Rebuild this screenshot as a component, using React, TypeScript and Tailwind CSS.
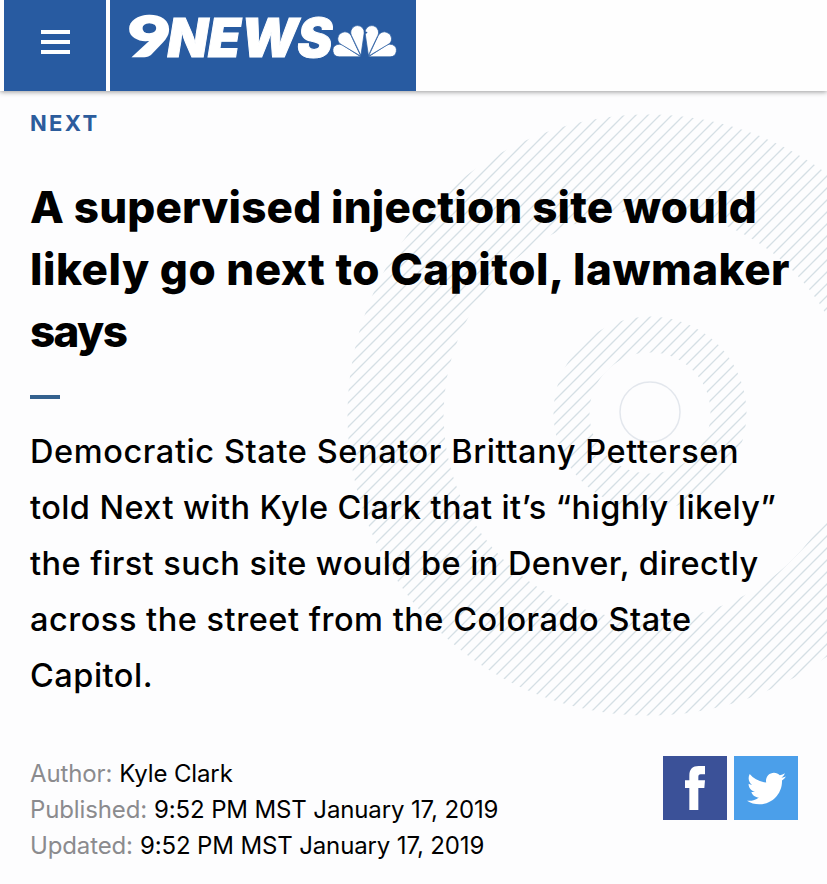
import { FaTwitter } from "react-icons/fa";

const headline = [
  { text: "A supervised injection site would", className: "tracking-[0.15px]" },
  { text: "likely go next to Capitol, lawmaker", className: "tracking-[0.5px]" },
  { text: "says", className: "tracking-[-1.6px]" },
];

const summary = [
  { text: "Democratic State Senator Brittany Pettersen", className: "tracking-[0.6px]" },
  { text: "told Next with Kyle Clark that it’s “highly likely”", className: "tracking-[0.43px]" },
  { text: "the first such site would be in Denver, directly", className: "tracking-[0.44px]" },
  { text: "across the street from the Colorado State", className: "tracking-[0.52px]" },
  { text: "Capitol.", className: "tracking-[0.5px]" },
];

const details = [
  { label: "Author:", value: "Kyle Clark" },
  { label: "Published:", value: "9:52 PM MST January 17, 2019" },
  { label: "Updated:", value: "9:52 PM MST January 17, 2019" },
];

function Feathers() {
  return (
    <g fill="#fff" stroke="#285ba1" strokeWidth="0.7">
      <path d="M360.8 56.8H339.2a6.3 6.3 0 0 1-2.2-12.2a7 7 0 0 1 5.6.4z" />
      <path d="M360.8 56.2L341.4 44.6a6.6 6.6 0 0 1 1-12.2a6.8 6.8 0 0 1 8.6 3z" />
      <path d="M360.9 55.4L351.4 35.4a6.9 6.9 0 0 1 6-9.8a6.7 6.7 0 0 1 6.8 7.4z" />
    </g>
  );
}

function Logo() {
  return (
    <svg className="block h-[91px] w-[306px]" viewBox="110 0 306 91" fill="#fff" fontWeight="900">
      <text
        x="128"
        y="55.5"
        fontFamily="Lato, sans-serif"
        fontSize="56"
        textLength="43"
        lengthAdjust="spacingAndGlyphs"
        stroke="#fff"
        strokeWidth="2.4"
      >
        9
      </text>
      <text
        x="167.5"
        y="56.5"
        fontFamily="Inter, sans-serif"
        fontStyle="italic"
        fontSize="53"
        textLength="165"
        lengthAdjust="spacingAndGlyphs"
        stroke="#fff"
        strokeWidth="1"
      >
        NEWS
      </text>
      <Feathers />
      <g transform="translate(729.3 0) scale(-1 1)">
        <Feathers />
      </g>
      <path d="M364.6 31.5l3 .4-2 2.6z" fill="#285ba1" />
    </svg>
  );
}

function Header() {
  return (
    <header className="relative z-10 flex h-[91px] gap-1 bg-[#fefefe] pl-1 shadow-[0_1px_5px_rgba(0,0,0,0.4)]">
      <button className="flex w-[102px] flex-col items-center gap-1.5 bg-[#285ba1] pt-[30px]" aria-label="Menu">
        <span className="h-1 w-[29px] bg-white" />
        <span className="h-1 w-[29px] bg-white" />
        <span className="h-1 w-[29px] bg-white" />
      </button>
      <div className="w-[306px] bg-[#285ba1]">
        <Logo />
      </div>
    </header>
  );
}

function Backdrop() {
  return (
    <svg className="absolute top-0 left-0 h-[793px] w-[827px]" viewBox="0 91 827 793" fill="none">
      <defs>
        <pattern id="hatch" width="12" height="12" patternUnits="userSpaceOnUse">
          <path d="M-1 8L8-1M6 13L13 6" stroke="#d5dfe5" strokeWidth="1.3" />
        </pattern>
      </defs>
      <circle cx="648" cy="415" r="252.5" stroke="url(#hatch)" strokeWidth="96" />
      <circle cx="650" cy="413" r="78.5" stroke="url(#hatch)" strokeWidth="36" />
      <circle cx="650" cy="412" r="30" stroke="#e3e7ed" strokeWidth="1.5" />
    </svg>
  );
}

export default function App() {
  return (
    <div className="flex h-[884px] w-[827px] flex-col overflow-hidden bg-[#fdfdfe] font-['Inter',sans-serif] text-black">
      <Header />
      <main className="relative flex-1">
        <Backdrop />
        <div className="relative pr-[29px] pl-[30px]">
          <p className="pt-[18px] text-[22px] leading-7 font-bold tracking-[2.3px] text-[#2c5c9c]">NEXT</p>
          <h1 className="pt-[39px] text-[44px] leading-[62px] font-extrabold whitespace-nowrap">
            {headline.map((line) => (
              <span key={line.text} className={`block ${line.className}`}>
                {line.text}
              </span>
            ))}
          </h1>
          <div className="mt-[33px] h-1 w-[30px] bg-[#34618e]" />
          <p className="pt-[25px] text-[32.5px] leading-[56px] font-medium whitespace-nowrap">
            {summary.map((line) => (
              <span key={line.text} className={`block ${line.className}`}>
                {line.text}
              </span>
            ))}
          </p>
          <div className="mt-[52px] flex justify-between">
            <dl className="text-[24px] leading-9 tracking-[-0.13px]">
              {details.map((item) => (
                <div key={item.label} className="flex gap-[7px]">
                  <dt className="text-[#8b8b8e]">{item.label}</dt>
                  <dd>{item.value}</dd>
                </div>
              ))}
            </dl>
            <div className="flex gap-[7px]">
              <a className="size-16 bg-[#3b5198]" aria-label="Facebook">
                <svg viewBox="0 0 192 192" fill="#fff">
                  <path d="M79 162V96H66V73H79V59C79 39 89 30 107 30H126V55H113C108 55 106 58 106 63V73H126L124 96H106V162Z" />
                </svg>
              </a>
              <a className="flex size-16 items-center justify-center bg-[#4b9fea] text-white" aria-label="Twitter">
                <FaTwitter size={39} />
              </a>
            </div>
          </div>
        </div>
      </main>
    </div>
  );
}
